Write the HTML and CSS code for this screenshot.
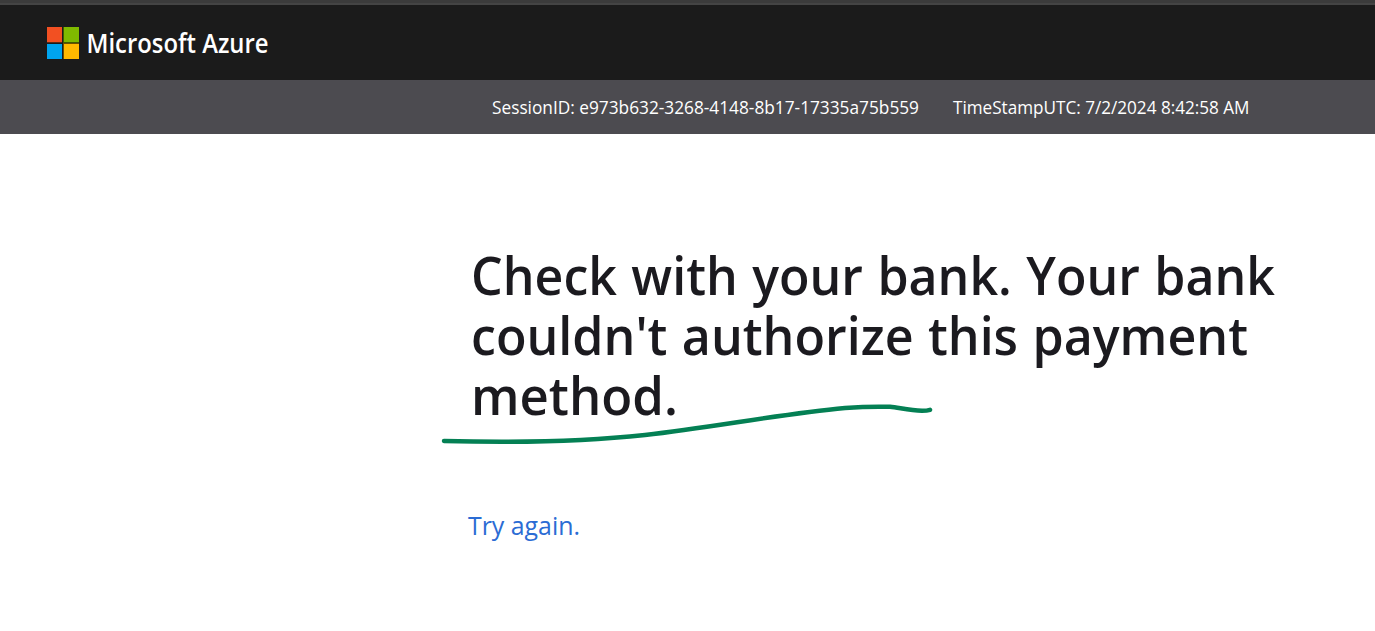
FILE: index.html
```html
<!DOCTYPE html>
<html lang="en">
<head>
<meta charset="utf-8">
<title>Microsoft Azure</title>
<link rel="stylesheet" href="styles.css">
</head>
<body>
<header class="topbar">
  <svg class="logo" width="32" height="32" viewBox="0 0 32 32" aria-hidden="true">
    <path fill="#5c2a18" d="M0 15h15v1H0z"/>
    <path fill="#3f5c00" d="M16 0h1v15h15v1H16z"/>
    <path fill="#6b4e00" d="M16 16h16v1H17v15h-1z"/>
    <path fill="#f25022" d="M0 0h15v15H0z"/>
    <path fill="#7fba00" d="M17 0h15v15H17z"/>
    <path fill="#00a4ef" d="M0 17h15v15H0z"/>
    <path fill="#ffb900" d="M17 17h15v15H17z"/>
  </svg>
  <svg class="brand" width="182" height="40" viewBox="0 0 182 40"><text x="-1.5" y="29.5" textLength="182" lengthAdjust="spacingAndGlyphs">Microsoft Azure</text></svg>
</header>
<div class="session">
  <svg class="session-id" width="427" height="30"><text x="0" y="22" textLength="427" lengthAdjust="spacingAndGlyphs"><tspan>SessionID: e973b632-3268-4148-8b17-17335a75b559</tspan></text></svg>
  <svg class="session-time" width="297" height="30"><text x="0" y="22" textLength="296.500" lengthAdjust="spacingAndGlyphs">TimeStampUTC: 7/2/2024 8:42:58 AM</text></svg>
</div>
<main class="content">
  <h1 class="message">
    <svg class="line" width="810" height="60"><text x="-1" y="42.500" textLength="804" lengthAdjust="spacingAndGlyphs" word-spacing="1.5">Check with your bank. Your bank</text></svg>
    <svg class="line" width="810" height="60"><text x="-1" y="42.500" textLength="777" lengthAdjust="spacingAndGlyphs" word-spacing="1.5">couldn't authorize this payment</text></svg>
    <svg class="line" width="810" height="60"><text x="-1" y="42.500" textLength="207" lengthAdjust="spacingAndGlyphs">method.</text></svg>
  </h1>
  <a class="retry" href="#"><svg width="116" height="40"><text x="0" y="29" textLength="112" lengthAdjust="spacingAndGlyphs">Try again.</text></svg></a>
  <svg class="stroke" width="500" height="50" viewBox="440 400 500 50" aria-hidden="true">
    <path d="M444 441C520 443 590 441 645 435C715 427 780 414 845 408C865 406.500 880 406.500 890 406.800C900 408 910 410 922 410.800Q927 410.800 930 409.800"/>
  </svg>
</main>
</body>
</html>
```
FILE: styles.css
```css
* { box-sizing: border-box; }
body { margin: 0; background: #fff; font-family: "Open Sans", "Noto Sans", sans-serif; }
svg { display: block; overflow: visible; }
.topbar { height: 80px; border-top: 3px solid #3b3b3b; box-shadow: inset 0 2px #444; background: #1b1b1b; display: flex; align-items: center; padding: 2px 0 0 47px; gap: 9px; }
.brand text { font-size: 26.500px; font-weight: 600; fill: #fff; }
.session { height: 54px; background: #4c4b50; display: flex; align-items: center; padding-left: 492px; gap: 34px; }
.session text { font-size: 18px; fill: #fff; }
.content { position: relative; padding: 118px 0 0 472px; }
.message { margin: 0; }
.message text { font-size: 53px; font-weight: 540; fill: #1b1a1f; }
.retry { display: inline-block; margin: 74px 0 0 -4px; }
.retry text { font-size: 26px; fill: #2b6cd4; }
.stroke { position: absolute; left: 440px; top: 266px; }
.stroke path { fill: none; stroke: #048054; stroke-width: 4.5; stroke-linecap: round; stroke-linejoin: round; }
```
